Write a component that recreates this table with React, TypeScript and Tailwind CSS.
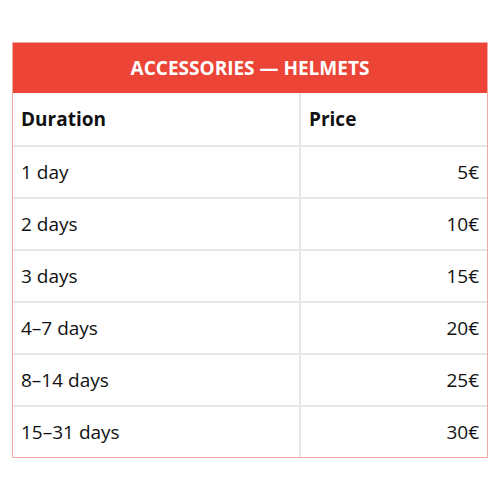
// Rental price table — accessories / helmets

const rows: { duration: string; price: string }[] = [
  { duration: "1 day", price: "5€" },
  { duration: "2 days", price: "10€" },
  { duration: "3 days", price: "15€" },
  { duration: "4–7 days", price: "20€" },
  { duration: "8–14 days", price: "25€" },
  { duration: "15–31 days", price: "30€" },
];

function Row({
  left,
  right,
  head,
  first,
}: {
  left: string;
  right: string;
  head?: boolean;
  first?: boolean;
}) {
  return (
    <div
      className={
        "grid grid-cols-[288px_1fr] h-[52px] " +
        (first ? "" : "border-t-2 border-[#e6e6e6]")
      }
    >
      <div
        className={
          "flex items-center pl-2 border-r-2 border-[#e6e6e6] " +
          (head ? "font-bold" : "")
        }
      >
        {left}
      </div>
      <div
        className={
          "flex items-center px-2 " +
          (head ? "font-bold justify-start" : "justify-end")
        }
      >
        {right}
      </div>
    </div>
  );
}

export default function App() {
  return (
    <div
      className="bg-white w-[500px] h-[500px] pt-[42px] pl-[12px] text-[19px] text-[#111]"
      style={{ fontFamily: '"Open Sans", sans-serif' }}
    >
      <div className="w-[476px] border border-[#f4aaa2]">
        <div className="h-[50px] bg-[#ec4537] flex items-center justify-center text-white font-bold uppercase">
          Accessories — Helmets
        </div>
        <Row left="Duration" right="Price" head first />
        {rows.map((r) => (
          <Row key={r.duration} left={r.duration} right={r.price} />
        ))}
      </div>
    </div>
  );
}
